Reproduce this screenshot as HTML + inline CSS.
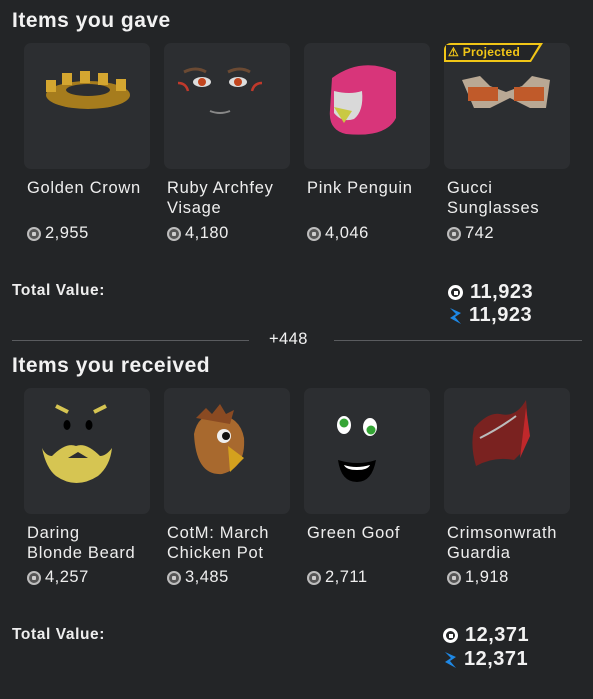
<!DOCTYPE html>
<html><head><meta charset="utf-8"><style>
*{margin:0;padding:0;box-sizing:border-box}
body{width:593px;height:699px;background:#232527;font-family:"Liberation Sans",sans-serif;color:#f2f2f2;position:relative;overflow:hidden}
.h{position:absolute;left:12px;font-size:21px;font-weight:bold;letter-spacing:0.5px}
.card{position:absolute;width:126px;height:126px;background:#2c2e31;border-radius:7px;overflow:hidden}
.card svg{position:absolute;left:0;top:0}
.nm{position:absolute;font-size:16.5px;line-height:20px;color:#eee;letter-spacing:0.7px;white-space:nowrap}
.pr{position:absolute;font-size:16.5px;color:#eee;display:flex;align-items:center;gap:4px;letter-spacing:0.5px}
.rb{width:14px;height:14px;border-radius:50%;border:2px solid #bdbdbd;position:relative;background:#555}
.rb::after{content:"";position:absolute;left:3px;top:3px;width:4px;height:4px;background:#ccc;border-radius:1px}
.tv{position:absolute;left:12px;font-size:15.5px;font-weight:bold;color:#eee;letter-spacing:0.6px}
.val{position:absolute;font-size:20px;font-weight:bold;display:flex;align-items:center;gap:7px;letter-spacing:0.5px}
.rbw{width:15px;height:15px;border-radius:50%;border:3px solid #fff;position:relative}
.rbw::after{content:"";position:absolute;left:2.5px;top:2.5px;width:4px;height:4px;background:#fff}
.line{position:absolute;top:340px;height:1px;background:#5a5c5f}
</style></head><body>
<div class="h" style="top:9px">Items you gave</div>

<div class="card" style="left:24px;top:43px"><svg width="126" height="126"><ellipse cx="64" cy="52" rx="42" ry="14" fill="#a67c1d"/><ellipse cx="64" cy="47" rx="22" ry="6" fill="#2c2e31"/><g fill="#d4a630"><rect x="22" y="37" width="10" height="12"/><rect x="38" y="30" width="10" height="12"/><rect x="56" y="28" width="10" height="12"/><rect x="74" y="30" width="10" height="12"/><rect x="92" y="36" width="10" height="12"/></g></svg></div>
<div class="card" style="left:164px;top:43px"><svg width="126" height="126"><path d="M20 29 q12-6 22 0 M64 29 q12-6 22 0" stroke="#6b4a33" stroke-width="3" fill="none"/><ellipse cx="38" cy="39" rx="9" ry="5" fill="#ddd"/><ellipse cx="74" cy="39" rx="9" ry="5" fill="#ddd"/><circle cx="38" cy="39" r="4" fill="#c2451e"/><circle cx="74" cy="39" r="4" fill="#c2451e"/><path d="M14 40 q8 0 10 8 M98 40 q-8 0-10 8" stroke="#c0392b" stroke-width="2.5" fill="none"/><path d="M46 68 q10 4 20 0" stroke="#888" stroke-width="2" fill="none"/></svg></div>
<div class="card" style="left:304px;top:43px"><svg width="126" height="126"><path d="M28 35 q30-22 64-6 v46 q-10 20-50 16 q-18-4-16-24z" fill="#d8357a"/><path d="M30 48 q16 4 28 0 q2 20-8 28 q-12 4-20-6z" fill="#d9d9d9"/><path d="M30 64 l18 4 l-8 12z" fill="#c9c943"/></svg></div>
<div class="card" style="left:444px;top:43px"><svg width="126" height="126"><path d="M18 37 l18 -4 l10 10 l16 6 l16-6 l10-10 l18 4 l-4 28 l-16 0 l-20-10 l-20 10 l-16 0z" fill="#b9a894"/><rect x="24" y="44" width="30" height="14" fill="#c05a2a"/><rect x="70" y="44" width="30" height="14" fill="#c05a2a"/><path d="M0 0 h99 l-12 19 h-87z" fill="#f1c617"/><path d="M2 2 h93 l-9 15 h-84z" fill="#232527"/></svg><div style="position:absolute;left:4px;top:2px;font-size:12px;font-weight:bold;color:#f1c617;letter-spacing:0.3px">⚠ Projected</div></div>

<div class="nm" style="left:27px;top:178px">Golden Crown</div>
<div class="nm" style="left:167px;top:178px">Ruby Archfey<br>Visage</div>
<div class="nm" style="left:307px;top:178px">Pink Penguin</div>
<div class="nm" style="left:447px;top:178px">Gucci<br>Sunglasses</div>
<div class="pr" style="left:27px;top:224px"><span class="rb"></span>2,955</div>
<div class="pr" style="left:167px;top:224px"><span class="rb"></span>4,180</div>
<div class="pr" style="left:307px;top:224px"><span class="rb"></span>4,046</div>
<div class="pr" style="left:447px;top:224px"><span class="rb"></span>742</div>

<div class="tv" style="top:282px">Total Value:</div>
<div class="val" style="left:448px;top:281px"><span class="rbw"></span>11,923</div>
<div class="val" style="left:448px;top:304px"><svg width="14" height="20"><path d="M2 2 l11 5 l-6 4 l6 7 l-11-6 l6-4z" fill="#1e88e5"/></svg>11,923</div>

<div class="line" style="left:12px;width:237px"></div>
<div style="position:absolute;left:269px;top:330px;font-size:16.5px;letter-spacing:0.4px">+448</div>
<div class="line" style="left:334px;width:248px"></div>

<div class="h" style="top:354px">Items you received</div>

<div class="card" style="left:24px;top:388px"><svg width="126" height="126"><path d="M32 18 l12 6 M70 24 l12-6" stroke="#d6c552" stroke-width="4"/><ellipse cx="43" cy="37" rx="3.5" ry="5" fill="#000"/><ellipse cx="65" cy="37" rx="3.5" ry="5" fill="#000"/><path d="M18 60 q4 20 14 28 q20 14 42 0 q12-10 14-28 q-6 8-12 8 q-14-14-24-10 q-10-4-24 10 q-6 0-10-8z" fill="#d6c552"/><path d="M44 70 l10-6 l10 6z" fill="#2c2e31"/></svg></div>
<div class="card" style="left:164px;top:388px"><svg width="126" height="126"><path d="M30 46 q4-20 22-20 q24 2 28 24 q2 30-22 36 q-26 2-28-40z" fill="#a8692e"/><path d="M32 30 l10-10 l6 6 l8-10 l6 10 l8-4 l-4 14z" fill="#8a4a22"/><circle cx="60" cy="48" r="7" fill="#eee"/><circle cx="62" cy="48" r="4" fill="#111"/><path d="M64 58 l16 12 l-14 14z" fill="#d4a11e"/></svg></div>
<div class="card" style="left:304px;top:388px"><svg width="126" height="126"><ellipse cx="40" cy="37" rx="7" ry="9" fill="#fff"/><ellipse cx="66" cy="39" rx="7" ry="9" fill="#fff"/><circle cx="40" cy="35" r="4.5" fill="#35a535"/><circle cx="67" cy="42" r="4.5" fill="#35a535"/><path d="M34 72 q20 6 38 0 q-4 22-19 22 q-16 0-19-22z" fill="#000"/><path d="M40 77 q12 4 26 0 q-2 5-13 5 q-11 0-13-5z" fill="#fff"/></svg></div>
<div class="card" style="left:444px;top:388px"><svg width="126" height="126"><path d="M30 40 q14-16 26-14 q16 4 26-14 q4 30-6 54 l-6 6 q-20-4-38 6 q-6-20-2-38z" fill="#7a2220"/><path d="M36 50 q20-10 36-22" stroke="#bbb" stroke-width="2" fill="none"/><path d="M82 20 l-6 50 l10-22z" fill="#c0282b"/></svg></div>

<div class="nm" style="left:27px;top:523px">Daring<br>Blonde Beard</div>
<div class="nm" style="left:167px;top:523px">CotM: March<br>Chicken Pot</div>
<div class="nm" style="left:307px;top:523px">Green Goof</div>
<div class="nm" style="left:447px;top:523px">Crimsonwrath<br>Guardia</div>
<div class="pr" style="left:27px;top:568px"><span class="rb"></span>4,257</div>
<div class="pr" style="left:167px;top:568px"><span class="rb"></span>3,485</div>
<div class="pr" style="left:307px;top:568px"><span class="rb"></span>2,711</div>
<div class="pr" style="left:447px;top:568px"><span class="rb"></span>1,918</div>

<div class="tv" style="top:626px">Total Value:</div>
<div class="val" style="left:443px;top:624px"><span class="rbw"></span>12,371</div>
<div class="val" style="left:443px;top:648px"><svg width="14" height="20"><path d="M2 2 l11 5 l-6 4 l6 7 l-11-6 l6-4z" fill="#1e88e5"/></svg>12,371</div>
</body></html>
